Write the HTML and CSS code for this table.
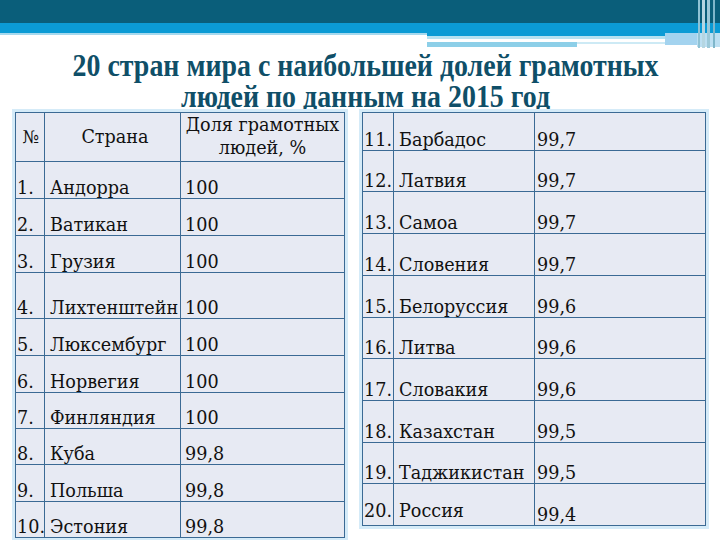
FILE: index.html
```html
<!DOCTYPE html>
<html lang="ru">
<head>
<meta charset="utf-8">
<title>20 стран мира</title>
<link rel="stylesheet" href="styles.css">
</head>
<body>
<div class="banner">
  <svg width="720" height="50" viewBox="0 0 720 50" xmlns="http://www.w3.org/2000/svg">
    <rect x="0" y="0" width="720" height="23" fill="#0a5e7a"/>
    <rect x="0" y="23" width="720" height="10" fill="#0b9bd5"/>
    <rect x="0" y="33" width="427" height="2" fill="#a6d9ee"/>
    <rect x="427" y="33" width="293" height="3" fill="#0b9bd5"/>
    <rect x="427" y="36" width="240" height="3" fill="#b6e2f1"/>
    <rect x="427" y="42" width="150" height="5" fill="#8dcfe8"/>
    <rect x="577" y="42" width="90" height="2" fill="#cdeaf5"/>
    <rect x="665" y="33" width="32" height="12" fill="#a3d3ef"/>
    <rect x="697" y="33" width="23" height="14" fill="#bcdff2"/>
    <rect x="698" y="0" width="2" height="48" fill="#8fc2d4"/>
    <rect x="702" y="0" width="3" height="48" fill="#b5d6e2"/>
    <rect x="707" y="0" width="3" height="48" fill="#9cc9d9"/>
    <rect x="713" y="0" width="2" height="48" fill="#7fb6ca"/>
  </svg>
</div>
<h1 class="title"><span class="title-in">20 стран мира с наибольшей долей грамотных<br>людей по данным на 2015 год</span></h1>
<div class="tables">
  <table class="t tl">
    <colgroup><col class="c1l"><col class="c2l"><col class="c3l"></colgroup>
    <tr class="h49 head"><td class="num-h">№</td><td>Страна</td><td class="two">Доля грамотных<br>людей, %</td></tr>
    <tr class="h37"><td>1.</td><td>Андорра</td><td>100</td></tr>
    <tr class="h37"><td>2.</td><td>Ватикан</td><td>100</td></tr>
    <tr class="h37"><td>3.</td><td>Грузия</td><td>100</td></tr>
    <tr class="h46"><td>4.</td><td>Лихтенштейн</td><td>100</td></tr>
    <tr class="h37"><td>5.</td><td>Люксембург</td><td>100</td></tr>
    <tr class="h37"><td>6.</td><td>Норвегия</td><td>100</td></tr>
    <tr class="h36"><td>7.</td><td>Финляндия</td><td>100</td></tr>
    <tr class="h36"><td>8.</td><td>Куба</td><td>99,8</td></tr>
    <tr class="h37"><td>9.</td><td>Польша</td><td>99,8</td></tr>
    <tr class="h36"><td>10.</td><td>Эстония</td><td>99,8</td></tr>
  </table>
  <table class="t tr-tab">
    <colgroup><col class="c1r"><col class="c2r"><col class="c3r"></colgroup>
    <tr class="h38"><td>11.</td><td>Барбадос</td><td>99,7</td></tr>
    <tr class="h41"><td>12.</td><td>Латвия</td><td>99,7</td></tr>
    <tr class="h42"><td>13.</td><td>Самоа</td><td>99,7</td></tr>
    <tr class="h42"><td>14.</td><td>Словения</td><td>99,7</td></tr>
    <tr class="h42"><td>15.</td><td>Белоруссия</td><td>99,6</td></tr>
    <tr class="h41"><td>16.</td><td>Литва</td><td>99,6</td></tr>
    <tr class="h42"><td>17.</td><td>Словакия</td><td>99,6</td></tr>
    <tr class="h42"><td>18.</td><td>Казахстан</td><td>99,5</td></tr>
    <tr class="h41"><td>19.</td><td>Таджикистан</td><td>99,5</td></tr>
    <tr class="h42 last"><td>20.</td><td>Россия</td><td>99,4</td></tr>
  </table>
</div>
</body>
</html>
```
FILE: styles.css
```css
html, body {
  margin: 0;
  padding: 0;
  background: #ffffff;
  width: 720px;
  height: 540px;
  overflow: hidden;
}
body {
  font-family: "DejaVu Serif", serif;
  color: #111;
}
.banner {
  height: 50px;
  line-height: 0;
}
.banner svg {
  display: block;
}
.title {
  display: flex;
  justify-content: center;
  margin: 0;
  padding-left: 12px;
  text-align: center;
  font-family: "Liberation Serif", "Times New Roman", serif;
  font-weight: bold;
  font-size: 31px;
  line-height: 31px;
  color: #0f4f68;
  white-space: nowrap;
}
.title-in {
  display: block;
  flex: none;
  transform: scaleX(0.9);
}
.tables {
  position: relative;
  display: flex;
  align-items: flex-start;
  gap: 17px;
  padding-left: 15px;
}
.t {
  border-collapse: collapse;
  table-layout: fixed;
  background: #e7eaf3;
  box-shadow: 0 0 0 3px #d5ebf8;
  font-family: "DejaVu Serif", serif;
  font-size: 17.6px;
  line-height: 20px;
}
.t td {
  border: 1px solid #3b6a94;
  padding: 0 0 0 4px;
  vertical-align: bottom;
  white-space: nowrap;
  overflow: visible;
}
.tl { width: 329px; }
.tr-tab { width: 343px; }
.c1l { width: 29px; }
.c2l { width: 136px; }
.c3l { width: 164px; }
.c1r { width: 31px; }
.c2r { width: 141px; }
.c3r { width: 171px; }
.tl td:first-child { padding-left: 1px; }
.tl td:nth-child(2) { padding-left: 5px; }
.tr-tab td:first-child { padding-left: 1px; }
.tr-tab td:nth-child(2) { padding-left: 5px; }
.tr-tab td:nth-child(3) { padding-left: 2px; }
.head td {
  vertical-align: middle;
  text-align: center;
  padding: 0;
}
.head td.two {
  line-height: 23px;
}
.last td:first-child,
.last td:nth-child(2) {
  padding-bottom: 4px;
}
.h36 { height: 36px; }
.h37 { height: 37px; }
.h38 { height: 38px; }
.h41 { height: 41px; }
.h42 { height: 42px; }
.h46 { height: 46px; }
.h49 { height: 49px; }
```
